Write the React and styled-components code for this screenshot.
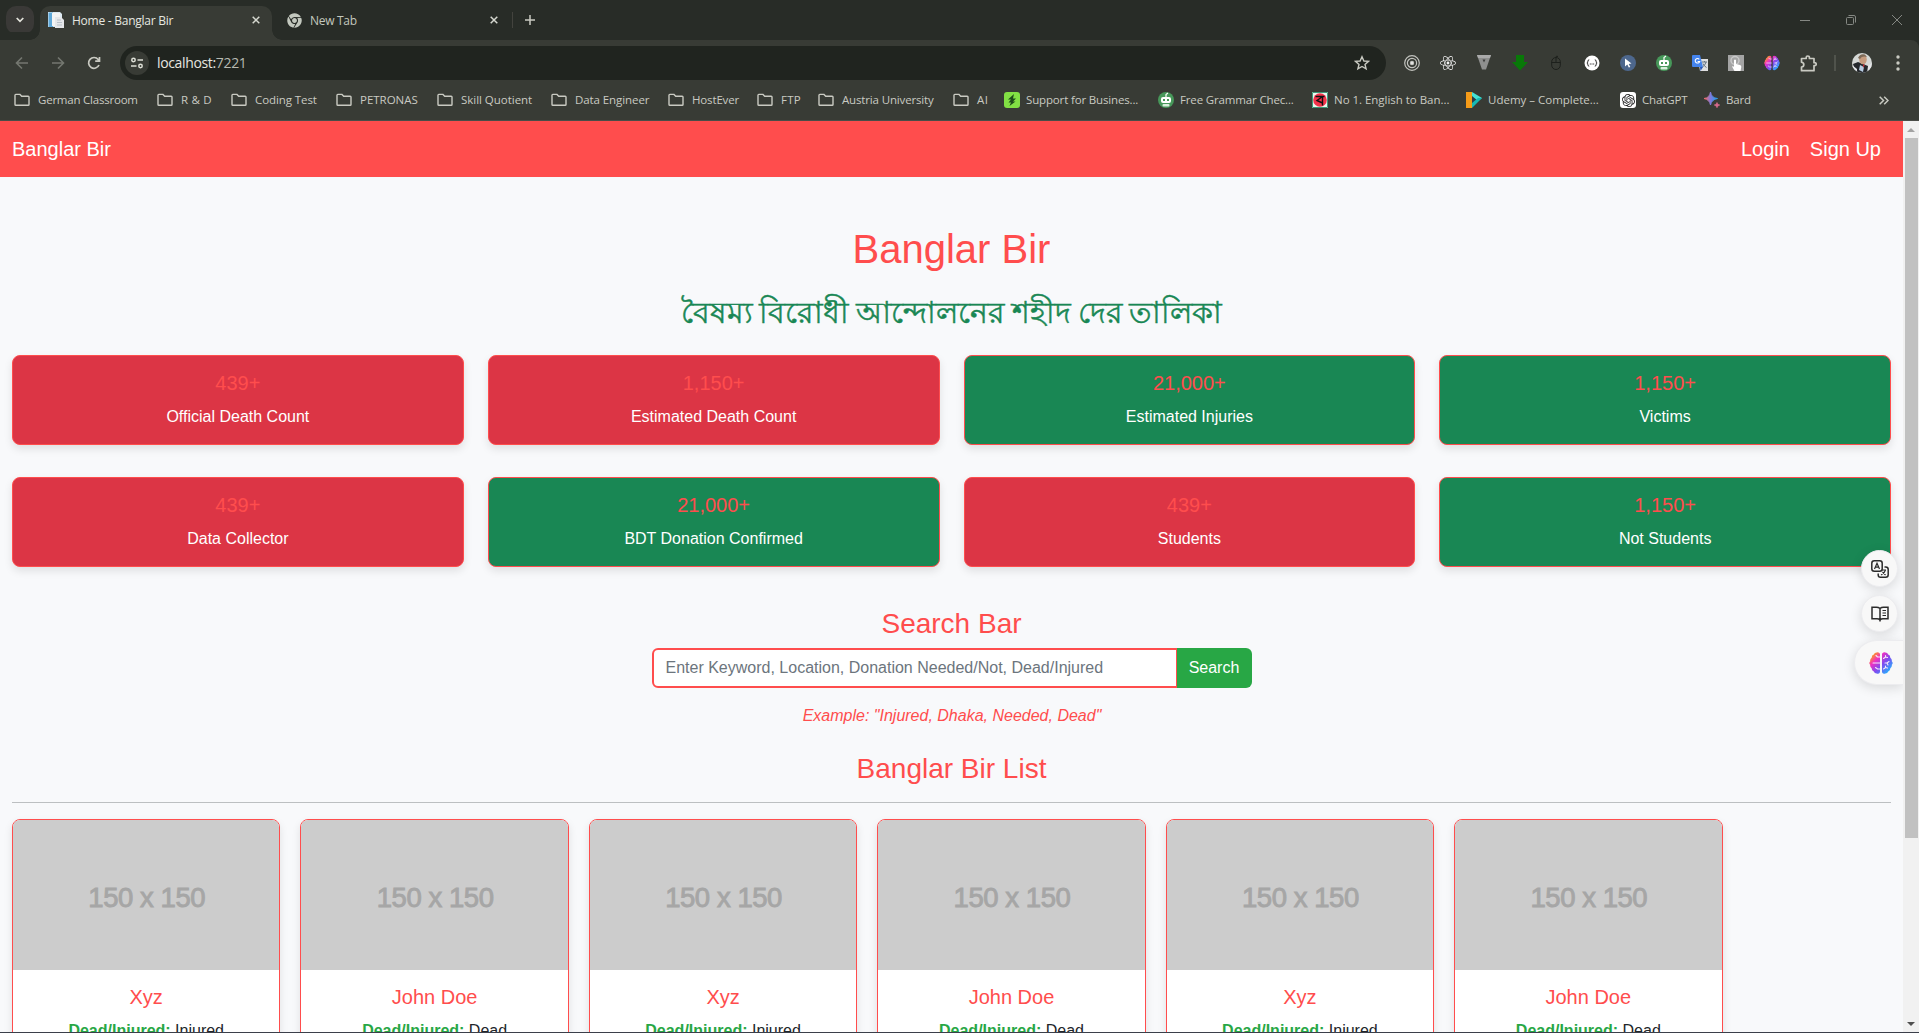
import React from "react";
import styled, { createGlobalStyle } from "styled-components";
import { FaReact, FaChrome } from "react-icons/fa";
import { SiOpenai } from "react-icons/si";

const GlobalStyle = createGlobalStyle`
  *, *::before, *::after { box-sizing: border-box; }
  html, body { margin: 0; padding: 0; overflow: hidden; }
  body { font-family: "Liberation Sans", Arial, sans-serif; font-size: 16px; line-height: 1.5; color: #212529; }
  h1, h2, h3, h5, p { margin: 0; font-weight: 400; }
  svg { display: block; flex: none; }
`;

/* ---------- browser frame ---------- */

const Window = styled.div`
  display: flex;
  flex-direction: column;
  width: 100vw;
  height: 100vh;
  overflow: hidden;
  border-bottom: 1px solid #3b3f4a;
  background: #383b35;
`;

const TabStrip = styled.header`
  display: flex;
  height: 40px;
  flex: none;
  padding-left: 6px;
  background: #282c27;
  font-family: "Open Sans", "Noto Sans", sans-serif;
  font-size: 12px;
`;

const TabSearch = styled.div`
  display: grid;
  place-items: center;
  width: 28px;
  height: 28px;
  margin: 6px 6px 0 0;
  border-radius: 10px;
  background: #3a3937;
`;

const Tab = styled.div`
  position: relative;
  display: flex;
  align-items: center;
  width: ${(p) => p.$width}px;
  height: ${(p) => (p.$active ? 34 : 28)}px;
  margin-top: 6px;
  padding: ${(p) => (p.$active ? "0 12px 6px 8px" : "0 8px 0 15px")};
  border-radius: 10px 10px 0 0;
  background: ${(p) => (p.$active ? "#383b35" : "transparent")};
  color: ${(p) => (p.$active ? "#e6e7e0" : "#c3c8be")};

  &::before,
  &::after {
    content: "";
    display: ${(p) => (p.$active ? "block" : "none")};
    position: absolute;
    bottom: 0;
    width: 10px;
    height: 10px;
  }
  &::before { left: -10px; background: radial-gradient(circle at 0 0, transparent 9.5px, #383b35 10px); }
  &::after { right: -10px; background: radial-gradient(circle at 100% 0, transparent 9.5px, #383b35 10px); }
`;

const TabTitle = styled.span`
  flex: 1;
  margin-left: 8px;
  padding-top: 2px;
  white-space: nowrap;
  letter-spacing: ${(p) => p.$spacing || 0}px;
`;

const TabDivider = styled.span`
  width: 1px;
  height: 16px;
  margin: 12px 12px 0 6px;
  background: #43433e;
`;

const NewTab = styled.span`
  margin-top: 15px;
`;

const WindowControls = styled.div`
  display: flex;
  align-items: center;
  gap: 36px;
  height: 40px;
  margin-left: auto;
  padding-right: 17px;
`;

const Toolbar = styled.div`
  display: flex;
  align-items: center;
  height: 46px;
  flex: none;
  padding: 0 0 0 13px;
  border-top-right-radius: 8px;
  background: #383b35;
  box-shadow: 0 -8px 0 0 #282c27;
`;

const NavIcons = styled.div`
  display: flex;
  gap: 18px;
  width: 107px;
`;

const AddressBar = styled.div`
  display: flex;
  align-items: center;
  width: 1266px;
  height: 34px;
  padding: 0 16px 0 5px;
  border-radius: 17px;
  background: #20241f;
  font-family: "Open Sans", "Noto Sans", sans-serif;
  font-size: 14px;
  letter-spacing: -0.35px;
  color: #e6e7e0;
`;

const SiteInfo = styled.span`
  display: grid;
  place-items: center;
  width: 24px;
  height: 24px;
  margin-right: 8px;
  border-radius: 50%;
  background: #383b35;
`;

const Url = styled.span`
  flex: 1;
  padding-bottom: 2px;
  span { color: #b7bab1; }
`;

const Extensions = styled.div`
  display: flex;
  align-items: center;
  gap: 20px;
  margin-left: 18px;
`;

const ToolbarDivider = styled.span`
  width: 2px;
  height: 16px;
  margin: 0 16px 0 17px;
  background: #50534c;
`;

const MenuSlot = styled.span`
  margin-left: 24px;
`;

const BookmarkBar = styled.nav`
  display: flex;
  align-items: center;
  height: 35px;
  flex: none;
  padding: 0 30px 6px 14px;
  border-bottom: 1px solid #4a4d48;
  font-family: "Open Sans", "Noto Sans", sans-serif;
  font-size: 11.5px;
  color: #c9cac2;
`;

const Bookmark = styled.div`
  display: flex;
  align-items: center;
  flex: none;
  gap: ${(p) => (p.$site ? 6 : 8)}px;
  width: ${(p) => p.$width}px;
  white-space: nowrap;
  letter-spacing: ${(p) => p.$spacing}px;
`;

const Overflow = styled.span`
  margin-left: auto;
`;

/* ---------- page ---------- */

const Viewport = styled.div`
  display: flex;
  flex: 1;
  min-height: 0;
`;

const Page = styled.main`
  position: relative;
  flex: 1;
  min-width: 0;
  overflow: hidden;
  background: #f8f9fb;
`;

const Navbar = styled.nav`
  display: flex;
  align-items: center;
  justify-content: space-between;
  height: 56px;
  padding: 0 22px 0 12px;
  background: #ff4d4d;
  font-size: 20px;
  color: #fff;
`;

const NavLinks = styled.div`
  display: flex;
  gap: 20px;
`;

const Container = styled.div`
  padding: 48px 12px 0;
  text-align: center;
`;

const Title = styled.h1`
  margin-bottom: 8px;
  font-size: 40px;
  line-height: 48px;
  color: #ff4d4d;
`;

const Subtitle = styled.h2`
  height: 74px;
  padding-top: 12px;
  font-size: 30px;
  line-height: 40px;
  word-spacing: -1.6px;
  white-space: nowrap;
  color: #198754;
  -webkit-text-stroke: 0.5px #198754;
`;

const StatGrid = styled.section`
  display: grid;
  grid-template-columns: repeat(4, 1fr);
  gap: 32px 24px;
  margin-bottom: 40px;
`;

const StatCard = styled.article`
  height: 90px;
  padding: 15px 16px 0;
  border: 1px solid #ff4d4d;
  border-radius: 8px;
  background: ${(p) => (p.$green ? "#198754" : "#dc3545")};
  box-shadow: 0 4px 8px rgba(0, 0, 0, 0.1);
  color: #fff;
`;

const StatValue = styled.h5`
  margin-bottom: 10px;
  font-size: 20px;
  line-height: 24px;
  color: #ff4d4d;
`;

const SectionTitle = styled.h3`
  font-size: 28px;
  line-height: 34px;
  color: #ff4d4d;
`;

const SearchGroup = styled.div`
  display: flex;
  width: 600px;
  height: 40px;
  margin: 7px auto 16px;
`;

const SearchInput = styled.input`
  flex: 1;
  min-width: 0;
  padding: 6px 12px;
  border: 2px solid #ff4d4d;
  border-radius: 6px 0 0 6px;
  background: #fff;
  font: inherit;
  &::placeholder { color: #6c757d; opacity: 1; }
`;

const SearchButton = styled.button`
  width: 75px;
  margin-left: -1px;
  padding: 0;
  border: 0;
  border-radius: 0 6px 6px 0;
  background: #28a745;
  font: inherit;
  color: #fff;
`;

const Example = styled.p`
  margin-bottom: 24px;
  padding-left: 1px;
  font-style: italic;
  color: #ff4d4d;
`;

const Rule = styled.hr`
  height: 1px;
  margin: 16px 0;
  border: 0;
  background: #bcbfc1;
`;

const People = styled.section`
  display: flex;
  gap: 20px;
`;

const PersonCard = styled.article`
  flex: none;
  width: calc(100% / 7);
  height: 330px;
  overflow: hidden;
  border: 1px solid #ff4d4d;
  border-radius: 8px;
  background: #fff;
  box-shadow: 0 4px 8px rgba(0, 0, 0, 0.1);
`;

const Photo = styled.div`
  display: grid;
  place-items: center;
  height: 150px;
  padding: 6px 0 0 1px;
  background: #ccc;
  font-size: 27.5px;
  letter-spacing: -0.45px;
  color: #a6a6a6;
  -webkit-text-stroke: 0.9px #a6a6a6;
`;

const PersonName = styled.h5`
  margin: 15px 0 10px;
  font-size: 20px;
  line-height: 24px;
  color: #ff4d4d;
`;

const Status = styled.p`
  strong { color: #28a745; }
`;

/* tools floating over the right edge of the page */
const FloatingTools = styled.aside`
  position: absolute;
  top: 429px;
  right: 0;
  display: flex;
  flex-direction: column;
  align-items: flex-end;
`;

const RoundTool = styled.div`
  display: grid;
  place-items: center;
  width: 37px;
  height: 37px;
  margin: 0 5px 8px 0;
  border: 1px solid #ececef;
  border-radius: 50%;
  background: #f8f8f8;
  box-shadow: 0 3px 12px rgba(0, 0, 0, 0.13);
`;

const SideTool = styled.div`
  display: flex;
  align-items: center;
  width: 49px;
  height: 45px;
  padding-left: 14px;
  border: 1px solid #ececef;
  border-right: 0;
  border-radius: 23px 0 0 23px;
  background: #f8f8f8;
  box-shadow: 0 3px 12px rgba(0, 0, 0, 0.13);
`;

const Scrollbar = styled.div`
  display: flex;
  flex-direction: column;
  align-items: center;
  justify-content: space-between;
  width: 16px;
  flex: none;
  padding: 7px 0 6px;
  background: #f1f1f1;
`;

const Thumb = styled.span`
  width: 13px;
  height: 700px;
  margin: 6px 0 auto;
  background: #c1c1c1;
`;

/* ---------- icons ---------- */

const Line = ({ w = 16, h = w, box = `0 0 ${w} ${h}`, color = "#c9cac2", sw = 1.6, children }) => (
  <svg width={w} height={h} viewBox={box} fill="none" stroke={color} strokeWidth={sw}>
    {children}
  </svg>
);

const CloseIcon = () => <Line w={8} sw={1.5} color="#d6d8d0"><path d="M.7.7l6.600 6.600M7.300.7L.7 7.300" /></Line>;

const FolderIcon = () => (
  <Line w={16} h={14} sw={1.4}>
    <path d="M1 2.200q0-.8.8-.8H6l1.700 1.800h6.500q.8 0 .8.8v7.500q0 .8-.8.8H1.800q-.8 0-.8-.8z" />
  </Line>
);

const PageFavicon = () => (
  <svg width="16" height="16" viewBox="0 0 16 16">
    <path d="M0 0h12l2 2v13H0z" fill="#dce9f2" />
    <path d="M.5.5H5V15H.5z" fill="#5fa8d8" />
    <path d="M4 1h8v13H4z" fill="#f4f4f4" />
    <path d="M7 5h6l3 3v8H7z" fill="#e5e7ea" />
    <path d="M9 8h4M9 10.500h5M9 13h5" stroke="#b9c1c9" />
  </svg>
);

const BrainIcon = ({ size = 16, id }) => (
  <svg width={size} height={size} viewBox="0 0 24 24">
    <defs>
      <linearGradient id={id} gradientUnits="userSpaceOnUse" x1="2" y1="2" x2="22" y2="22">
        <stop offset="0.08" stopColor="#ff9a1f" />
        <stop offset="0.3" stopColor="#f02fc2" />
        <stop offset="0.58" stopColor="#7d4df0" />
        <stop offset="0.95" stopColor="#20b8ff" />
      </linearGradient>
    </defs>
    <path
      fill={`url(#${id})`}
      d="M11 2.800Q9.800.600 7.600 1.500 5.500 1.500 4.800 3.600 2.500 4.300 2.700 6.800.8 8 1.200 10.200-.6 12 1.200 13.800.8 16 2.700 17.200 2.500 19.700 4.800 20.400 5.500 22.500 7.600 22.500 9.800 23.400 11 21.200zM13 2.800Q14.200.6 16.400 1.500 18.500 1.500 19.200 3.600 21.500 4.300 21.300 6.800 23.200 8 22.800 10.200 24.600 12 22.800 13.800 23.200 16 21.300 17.200 21.500 19.700 19.200 20.400 18.500 22.500 16.400 22.500 14.200 23.400 13 21.200z"
    />
    <path
      fill="none" stroke="#f8e8fb" strokeWidth="1.100" strokeLinecap="round"
      d="M11 6H8.500L7 4.500M4 12h7M11 18H8.500L6.500 16.500M16 12h2l2-1.500M18 12l1 2M14.500 18l2-1.500 2 .5M16.500 16.500v-1.500M14.500 7.500l2-1.500 2 .5M16.500 6V4.500"
    />
  </svg>
);

const Robot = ({ color = "#47985a" }) => (
  <svg width="16" height="16" viewBox="0 0 16 16">
    <circle cx="8" cy="8" r="8" fill={color} />
    <path d="M8 5V2.500L10 1" stroke="#fff" fill="none" strokeWidth="1.200" />
    <rect x="3" y="5" width="10" height="6" rx="2" fill="#fff" />
    <rect x="4.500" y="12" width="7" height="2.500" rx="1" fill="#d9eedc" />
    <path d="M5 7h2v2H5zM9 7h2v2H9z" fill={color} />
  </svg>
);

const TargetExt = () => (
  <Line w={16} sw={1.2} color="#c2c3be">
    <circle cx="8" cy="8" r="7.300" /><circle cx="8" cy="8" r="4.600" /><circle cx="8" cy="8" r="1.600" fill="#eee" />
  </Line>
);

const VExt = () => (
  <svg width="16" height="16" viewBox="0 0 16 16">
    <path d="M1 0h14L10 14.500H6z" fill="#8e8f8e" /><path d="M1 0h14l-1 3H2z" fill="#aaa" /><path d="M6.500 4.500h3l-1.500 3z" fill="#3c3d3b" />
  </svg>
);

const ArrowExt = () => (
  <svg width="16" height="16" viewBox="0 0 16 16"><path d="M4 0h8v7h4l-8 8.500L0 7h4z" fill="#087808" /></svg>
);

const MouseExt = () => (
  <Line w={16} sw={1} color="#1d201c">
    <rect x="3.700" y="2.500" width="8.600" height="12" rx="4.300" /><path d="M3.500 7.500h9M8 7.500V2q0-1.500 2-.500" />
  </Line>
);

const BracesExt = () => (
  <svg width="16" height="16" viewBox="0 0 16 16">
    <circle cx="8" cy="8" r="7.500" fill="#fff" />
    <path d="M5.200 4.800q-1.300 0-1.300 1.400 0 1.800-1 1.800 1 0 1 1.800 0 1.400 1.300 1.400M10.800 4.800q1.300 0 1.300 1.400 0 1.800 1 1.800-1 0-1 1.800 0 1.400-1.300 1.400M5.800 9h1M7.500 9h1M9.200 9h1" fill="none" stroke="#222" strokeWidth="1" />
  </svg>
);

const CursorExt = () => (
  <svg width="16" height="16" viewBox="0 0 16 16">
    <circle cx="8" cy="8" r="8" fill="#4d678d" /><path d="M5 3.500l6.500 5-2.800.4 1.600 3-1.500.7-1.500-3L5 11.500z" fill="#fff" />
  </svg>
);

const TranslateExt = () => (
  <svg width="16" height="16" viewBox="0 0 16 16">
    <path d="M6 4h10v12H8z" fill="#dedfe0" />
    <path d="M1 0h7l3 12H1q-1 0-1-1V1q0-1 1-1z" fill="#4484ee" />
    <path d="M7.300 4.300A2.300 2.300 0 1 0 7.700 6.500H5.600" fill="none" stroke="#fff" strokeWidth="1.100" />
    <path d="M10 7h5M12.500 6v1M14 7q-.5 3-3.500 5M11 8.500q1 2.500 3.500 4" fill="none" stroke="#657585" />
    <path d="M8 12h3l-2.500 4z" fill="#2858b8" />
  </svg>
);

const HandExt = () => (
  <svg width="16" height="16" viewBox="0 0 16 16">
    <rect width="16" height="16" fill="#a4a4a4" /><circle cx="7" cy="5.500" r="4" fill="none" stroke="#c9c9c9" strokeWidth="1.500" />
    <path d="M6 5q1-1 2 0v4l4 1q1.500.4 1.300 2L12.500 16H6.500L4 11.500q1-.8 2 .2z" fill="#fff" />
  </svg>
);

const PuzzleIcon = () => (
  <Line w={17} h={17} sw={1.7}>
    <path d="M1.500 3.500h4.700V2.600a1.600 1.600 0 0 1 3.200 0v.9h4.600v4.200h.7a1.500 1.500 0 0 1 0 3H14v5H1.500v-3.700q2.300-.3 2.300-2.300T1.500 7.200z" strokeLinejoin="round" />
  </Line>
);

const Avatar = () => (
  <svg width="20" height="20" viewBox="0 0 20 20">
    <clipPath id="avatarClip"><circle cx="10" cy="10" r="10" /></clipPath>
    <g clipPath="url(#avatarClip)">
      <path fill="#d5d8d6" d="M0 0h20v20H0z" />
      <path d="M1 11l5-2 5 2 5 2 1 7H4z" fill="#25282c" />
      <ellipse cx="11" cy="6.500" rx="3.800" ry="4.800" fill="#c69b7e" />
      <path d="M6 5Q8 0 13 1.500L15 4Q10 2.500 8 6z" fill="#7d6a58" />
      <path d="M8 12l4 2-1 5-4-2z" fill="#b7cbe0" /><path d="M11 11l2 1-2 3z" fill="#b62e38" />
      <path d="M0 12l5 4v4H0zM16 13l4-3v10h-5z" fill="#e4e5e8" />
    </g>
  </svg>
);

const MoreIcon = () => (
  <svg width="4" height="16" viewBox="0 0 4 16" fill="#c9cac2"><circle cx="2" cy="2" r="1.700" /><circle cx="2" cy="8" r="1.700" /><circle cx="2" cy="14" r="1.700" /></svg>
);

const BoltSite = () => (
  <svg width="16" height="16" viewBox="0 0 16 16"><rect width="16" height="16" rx="3" fill="#82e044" /><path d="M10 2L4 7.500h3L4.500 10.500H7L5.500 14l6-4.500H9L12 6.500H9z" fill="#1f4c1a" /></svg>
);
const BanglaSite = () => (
  <svg width="16" height="16" viewBox="0 0 16 16">
    <rect width="16" height="16" fill="#e9f5ef" /><path d="M.5.500h15v15H.5z" fill="none" stroke="#3c9a78" /><circle cx="8" cy="8" r="6.800" fill="#f3324a" />
    <path d="M3.500 4.500h9M10.500 4.500v9M10.500 11L5 8.500l5.500-4" fill="none" stroke="#111" strokeWidth="1.400" />
  </svg>
);
const CourseSite = () => (
  <svg width="16" height="16" viewBox="0 0 16 16"><path d="M0 0h6v16H0z" fill="#f59b18" /><path d="M6 0l10 6-4 3-6-5z" fill="#43e0d4" /><path d="M6 5l4 3-4 3z" fill="#2b3d4c" /><path d="M16 6L6 16v-5l6-5z" fill="#16b9b4" /></svg>
);
const ChatTile = styled.span`
  display: grid;
  place-items: center;
  width: 16px;
  height: 16px;
  border-radius: 3px;
  background: #fff;
  color: #222;
`;
const ChatSite = () => <ChatTile><SiOpenai size={13} /></ChatTile>;
const SparkSite = () => (
  <svg width="16" height="16" viewBox="0 0 16 16">
    <defs><linearGradient id="spark"><stop offset=".1" stopColor="#e76c72" /><stop offset=".5" stopColor="#7a7be0" /><stop offset=".9" stopColor="#2f9be8" /></linearGradient></defs>
    <path d="M6.500 0Q7.500 6 13.500 6.500 7.500 7.500 6.500 13 5.500 7.500 0 6.500 5.500 6 6.500 0z" fill="url(#spark)" stroke="url(#spark)" />
    <path d="M13 10.500q.4 2.200 2.800 2.500-2.400.4-2.800 2.800-.4-2.400-2.800-2.800 2.400-.3 2.800-2.500z" fill="#d96a8d" stroke="#d96a8d" strokeWidth=".6" />
  </svg>
);

const TranslateTool = () => (
  <Line w={18} sw={1.5} color="#2b2b2b">
    <rect x=".8" y=".8" width="10.400" height="10.400" rx="2.500" />
    <path d="M3.500 9L6 3.200 8.500 9M4.400 7.200h3.200" strokeWidth="1.200" />
    <path d="M13.500 7h1.200q2.500 0 2.500 2.500v5.200q0 2.500-2.500 2.500H9.500Q7.200 17.200 7.200 14.900V13.500" />
    <path d="M11 10h4M14.500 10q-1 3.500-4.500 5M11.500 12l3 3" strokeWidth="1.100" />
  </Line>
);

const BookTool = () => (
  <Line w={18} h={16} sw={1.5} color="#2b2b2b">
    <path d="M9 2.500Q7.500 1.200 5.500 1.200H1v11.600h5q2 0 3 1.200 1-1.200 3-1.200h5V1.200h-4.500Q10.500 1.200 9 2.500zM9 2.500V15.500" />
    <path d="M11.500 4.500H15M11.500 7H15M11.500 9.500H15" strokeWidth="1.200" />
  </Line>
);

/* ---------- data ---------- */

const bookmarks = [
  { label: "German Classroom", width: 143, spacing: -0.22 },
  { label: "R & D", width: 74, spacing: 0.2 },
  { label: "Coding Test", width: 105, spacing: -0.08 },
  { label: "PETRONAS", width: 101, spacing: -0.02 },
  { label: "Skill Quotient", width: 114, spacing: -0.03 },
  { label: "Data Engineer", width: 117, spacing: -0.08 },
  { label: "HostEver", width: 89 },
  { label: "FTP", width: 61, spacing: 0.2 },
  { label: "Austria University", width: 135 },
  { label: "AI", width: 51, spacing: 0.4 },
  { label: "Support for Busines...", width: 154, Icon: BoltSite },
  { label: "Free Grammar Chec...", width: 154, Icon: Robot },
  { label: "No 1. English to Ban...", width: 154, spacing: -0.03, Icon: BanglaSite },
  { label: "Udemy – Complete...", width: 154, spacing: 0, Icon: CourseSite },
  { label: "ChatGPT", width: 84, Icon: ChatSite },
  { label: "Bard", width: 60, Icon: SparkSite },
];

const stats = [
  { value: "439+", label: "Official Death Count" },
  { value: "1,150+", label: "Estimated Death Count" },
  { value: "21,000+", label: "Estimated Injuries", green: true },
  { value: "1,150+", label: "Victims", green: true },
  { value: "439+", label: "Data Collector" },
  { value: "21,000+", label: "BDT Donation Confirmed", green: true },
  { value: "439+", label: "Students" },
  { value: "1,150+", label: "Not Students", green: true },
];

const people = Array.from({ length: 6 }, (_, i) =>
  i % 2 ? { name: "John Doe", status: "Dead" } : { name: "Xyz", status: "Injured" }
);

/* ---------- app ---------- */

function BrowserChrome() {
  return (
    <>
      <TabStrip>
        <TabSearch>
          <Line w={8} h={6} sw={1.7} color="#e3e3dc"><path d="M.7 1L4 4.300 7.300 1" /></Line>
        </TabSearch>
        <Tab $active $width={232}>
          <PageFavicon />
          <TabTitle $spacing={-0.25}>Home - Banglar Bir</TabTitle>
          <CloseIcon />
        </Tab>
        <Tab $width={234}>
          <FaChrome size={15} />
          <TabTitle $spacing={-0.3}>New Tab</TabTitle>
          <CloseIcon />
        </Tab>
        <TabDivider />
        <NewTab><Line w={10} sw={1.5}><path d="M5 0v10M0 5h10" /></Line></NewTab>
        <WindowControls>
          <Line w={10} sw={1} color="#858883"><path d="M0 5.500h10" /></Line>
          <Line w={10} sw={1} color="#858883"><rect x=".5" y="2.500" width="7" height="7" rx="1" /><path d="M2.500.500H8Q9.500.500 9.500 2v5.500" /></Line>
          <Line w={10} sw={1} color="#858883"><path d="M0 0l10 10M10 0L0 10" /></Line>
        </WindowControls>
      </TabStrip>
      <Toolbar>
        <NavIcons>
          <Line w={18} color="#747770"><path d="M15 9H4M9 3.500L3.500 9 9 14.500" /></Line>
          <Line w={18} color="#747770"><path d="M3 9h11M9 3.500L14.500 9 9 14.500" /></Line>
          <Line w={18} sw={1.7}><path d="M14 11a5.400 5.400 0 1 1-.8-5.500L14.500 7M14.500 3v4.200h-4.300" /></Line>
        </NavIcons>
        <AddressBar>
          <SiteInfo>
            <Line w={14} h={12} sw={1.5} color="#dddfd6">
              <circle cx="3.500" cy="3" r="1.700" /><path d="M7.500 3H13M1 9h5.500" /><circle cx="10.500" cy="9" r="1.700" />
            </Line>
          </SiteInfo>
          <Url>localhost:<span>7221</span></Url>
          <Line w={16} sw={1.4}><path d="M8 1.800l1.900 4.200 4.600.4-3.500 3 1.100 4.500L8 11.500l-4.100 2.400L5 9.400l-3.500-3 4.600-.4z" /></Line>
        </AddressBar>
        <Extensions>
          <TargetExt />
          <FaReact size={16} color="#f2f2f2" />
          <VExt />
          <ArrowExt />
          <MouseExt />
          <BracesExt />
          <CursorExt />
          <Robot />
          <TranslateExt />
          <HandExt />
          <BrainIcon id="brainSmall" />
          <PuzzleIcon />
        </Extensions>
        <ToolbarDivider />
        <Avatar />
        <MenuSlot><MoreIcon /></MenuSlot>
      </Toolbar>
      <BookmarkBar>
        {bookmarks.map(({ label, width, spacing = -0.15, Icon }) => (
          <Bookmark key={label} $width={width} $site={!!Icon} $spacing={spacing}>
            {Icon ? <Icon /> : <FolderIcon />}
            {label}
          </Bookmark>
        ))}
        <Overflow>
          <Line w={10} h={9} sw={1.5}><path d="M.7.700L4.500 4.500.7 8.300M5.200.700L9 4.500 5.200 8.300" /></Line>
        </Overflow>
      </BookmarkBar>
    </>
  );
}

export default function App() {
  return (
    <Window>
      <GlobalStyle />
      <BrowserChrome />
      <Viewport>
        <Page>
          <Navbar>
            <span>Banglar Bir</span>
            <NavLinks><span>Login</span><span>Sign Up</span></NavLinks>
          </Navbar>
          <Container>
            <Title>Banglar Bir</Title>
            <Subtitle>বৈষম্য বিরোধী আন্দোলনের শহীদ দের তালিকা</Subtitle>
            <StatGrid>
              {stats.map((s) => (
                <StatCard key={s.label} $green={s.green}>
                  <StatValue>{s.value}</StatValue>
                  <p>{s.label}</p>
                </StatCard>
              ))}
            </StatGrid>
            <SectionTitle>Search Bar</SectionTitle>
            <SearchGroup>
              <SearchInput placeholder="Enter Keyword, Location, Donation Needed/Not, Dead/Injured" />
              <SearchButton>Search</SearchButton>
            </SearchGroup>
            <Example>Example: "Injured, Dhaka, Needed, Dead"</Example>
            <SectionTitle>Banglar Bir List</SectionTitle>
            <Rule />
            <People>
              {people.map((p, i) => (
                <PersonCard key={i}>
                  <Photo>150 x 150</Photo>
                  <PersonName>{p.name}</PersonName>
                  <Status><strong>Dead/Injured:</strong> {p.status}</Status>
                </PersonCard>
              ))}
            </People>
          </Container>
          <FloatingTools>
            <RoundTool><TranslateTool /></RoundTool>
            <RoundTool><BookTool /></RoundTool>
            <SideTool><BrainIcon size={24} id="brainLarge" /></SideTool>
          </FloatingTools>
        </Page>
        <Scrollbar>
          <svg width="8" height="4" viewBox="0 0 8 4"><path d="M4 0l4 4H0z" fill="#a3a3a3" /></svg>
          <Thumb />
          <svg width="8" height="4" viewBox="0 0 8 4"><path d="M0 0h8L4 4z" fill="#505050" /></svg>
        </Scrollbar>
      </Viewport>
    </Window>
  );
}
